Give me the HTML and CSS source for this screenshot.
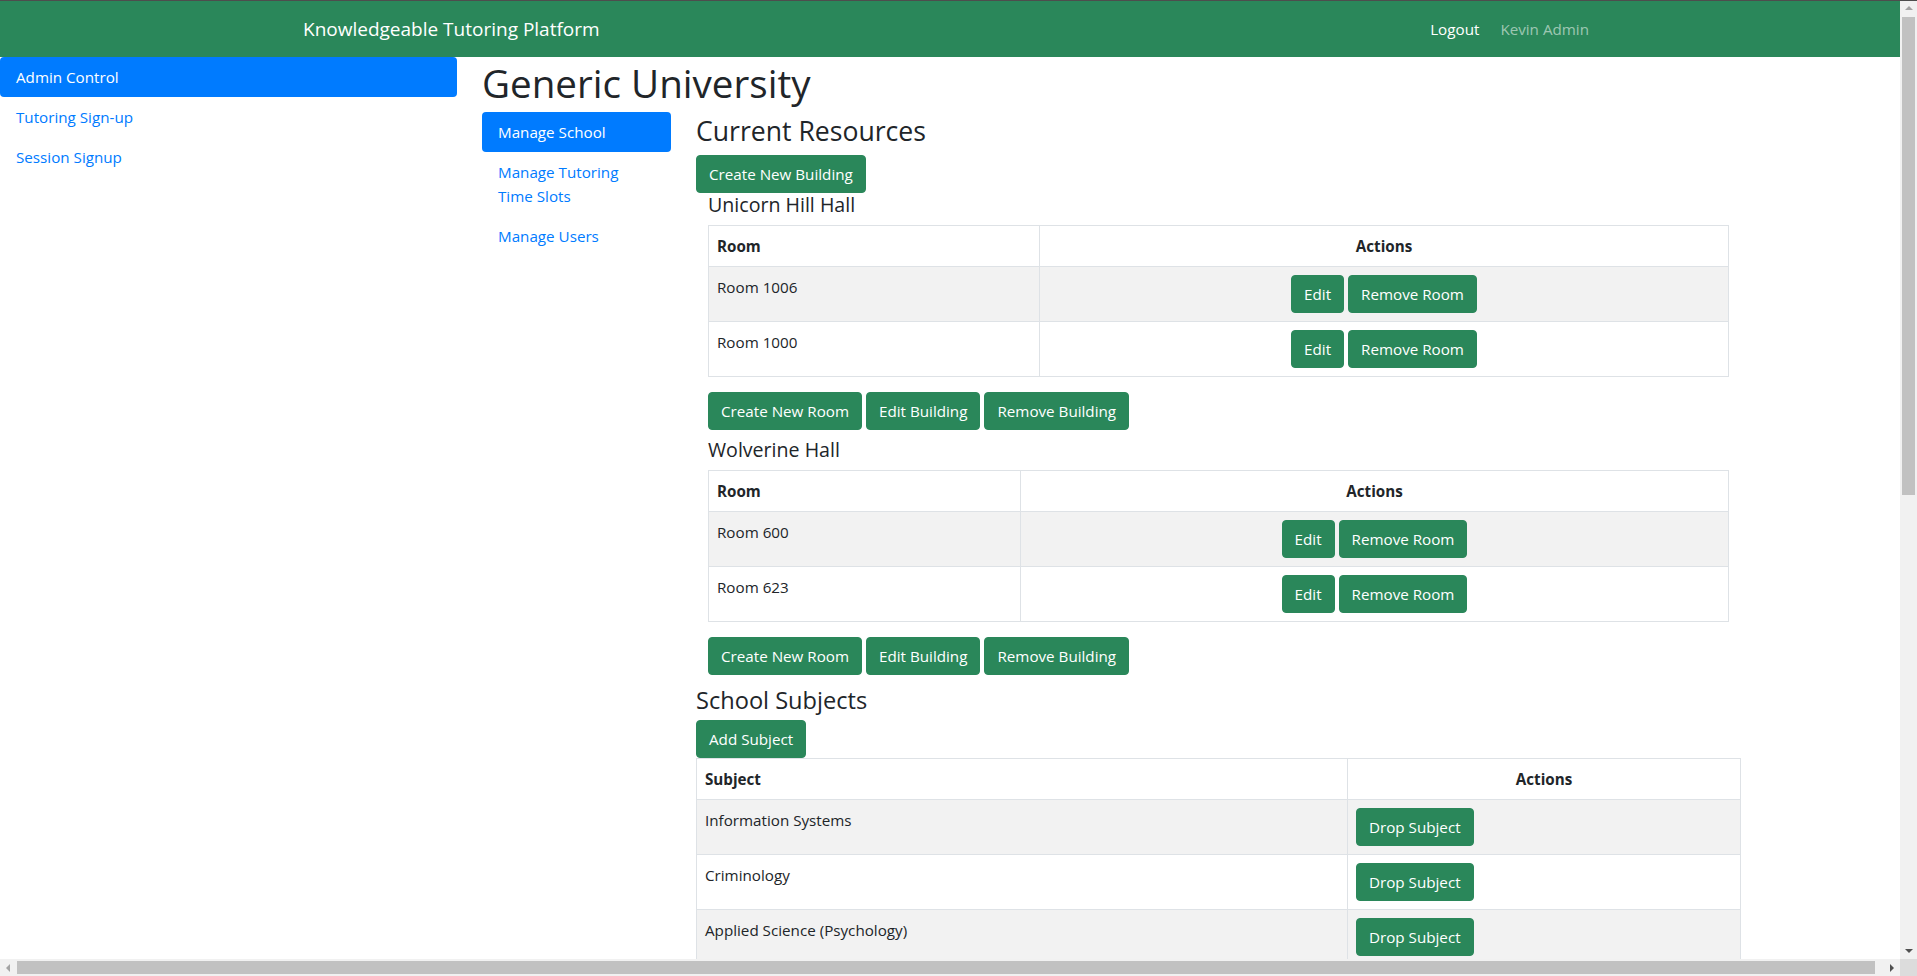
FILE: index.html
```html
<!DOCTYPE html>
<html lang="en">
<head>
<meta charset="utf-8">
<title>Knowledgeable Tutoring Platform</title>
<link rel="stylesheet" href="styles.css">
</head>
<body>
<div class="window-top"></div>
<nav class="navbar">
  <div class="nav-container">
    <a class="brand" href="#">Knowledgeable Tutoring Platform</a>
    <div class="nav-right">
      <a class="nav-link nav-active" href="#">Logout</a>
      <a class="nav-link nav-muted" href="#">Kevin Admin</a>
    </div>
  </div>
</nav>
<div class="layout">
  <aside class="sidebar">
    <a class="pill active" href="#">Admin Control</a>
    <a class="pill" href="#">Tutoring Sign-up</a>
    <a class="pill" href="#">Session Signup</a>
  </aside>
  <main class="main">
    <h1>Generic University</h1>
    <div class="main-row">
      <nav class="subnav">
        <a class="pill active" href="#">Manage School</a>
        <a class="pill" href="#">Manage Tutoring<br>Time Slots</a>
        <a class="pill" href="#">Manage Users</a>
      </nav>
      <section class="content">
        <h2>Current Resources</h2>
        <div class="btn-line"><button class="btn">Create New Building</button></div>

        <div class="building">
          <h5>Unicorn Hill Hall</h5>
          <table class="table">
            <colgroup><col class="col-room-a"><col></colgroup>
            <thead>
              <tr><th>Room</th><th class="center">Actions</th></tr>
            </thead>
            <tbody>
              <tr class="striped"><td>Room 1006</td><td><div class="cell-actions"><button class="btn">Edit</button><button class="btn">Remove Room</button></div></td></tr>
              <tr><td>Room 1000</td><td><div class="cell-actions"><button class="btn">Edit</button><button class="btn">Remove Room</button></div></td></tr>
            </tbody>
          </table>
          <div class="btn-row">
            <button class="btn">Create New Room</button>
            <button class="btn">Edit Building</button>
            <button class="btn">Remove Building</button>
          </div>
        </div>

        <div class="building">
          <h5>Wolverine Hall</h5>
          <table class="table">
            <colgroup><col class="col-room-b"><col></colgroup>
            <thead>
              <tr><th>Room</th><th class="center">Actions</th></tr>
            </thead>
            <tbody>
              <tr class="striped"><td>Room 600</td><td><div class="cell-actions"><button class="btn">Edit</button><button class="btn">Remove Room</button></div></td></tr>
              <tr><td>Room 623</td><td><div class="cell-actions"><button class="btn">Edit</button><button class="btn">Remove Room</button></div></td></tr>
            </tbody>
          </table>
          <div class="btn-row">
            <button class="btn">Create New Room</button>
            <button class="btn">Edit Building</button>
            <button class="btn">Remove Building</button>
          </div>
        </div>

        <h3>School Subjects</h3>
        <div class="btn-line"><button class="btn">Add Subject</button></div>
        <table class="table">
          <colgroup><col class="col-subject"><col></colgroup>
          <thead>
            <tr><th>Subject</th><th class="center">Actions</th></tr>
          </thead>
          <tbody>
            <tr class="striped"><td>Information Systems</td><td><div class="cell-actions left"><button class="btn">Drop Subject</button></div></td></tr>
            <tr><td>Criminology</td><td><div class="cell-actions left"><button class="btn">Drop Subject</button></div></td></tr>
            <tr class="striped"><td>Applied Science (Psychology)</td><td><div class="cell-actions left"><button class="btn">Drop Subject</button></div></td></tr>
          </tbody>
        </table>
      </section>
    </div>
  </main>
</div>

<div class="vscroll">
  <div class="arrow arrow-up"></div>
  <div class="vthumb"></div>
  <div class="arrow arrow-down"></div>
</div>
<div class="hscroll">
  <div class="arrow arrow-left"></div>
  <div class="hthumb"></div>
  <div class="arrow arrow-right"></div>
</div>
<div class="scroll-corner"></div>
</body>
</html>
```

FILE: styles.css
```css
* { box-sizing: border-box; }

html, body {
  margin: 0;
  padding: 0;
  height: 100%;
  overflow: hidden;
}

body {
  font-family: "Open Sans", "Noto Sans", "Liberation Sans", sans-serif;
  font-size: 15.2px;
  line-height: 24px;
  color: #212529;
  background: #fff;
}

a { text-decoration: none; }

/* window chrome */
.window-top {
  position: fixed;
  top: 0; left: 0; right: 0;
  height: 1px;
  background: #4d4d4d;
  z-index: 10;
}

/* navbar */
.navbar {
  height: 57px;
  background: #2a875a;
  display: flex;
  align-items: center;
}
.nav-container {
  width: 1326px;
  margin: 0 287px;
  padding: 0 16px;
  display: flex;
  align-items: center;
  justify-content: space-between;
}
.brand {
  color: #fff;
  font-size: 19px;
  line-height: 30px;
}
.nav-right {
  display: flex;
  gap: 5px;
}
.nav-link {
  padding: 0 8px;
  font-size: 15.2px;
}
.nav-active { color: #fff; }
.nav-muted { color: rgba(255, 255, 255, 0.55); }

/* layout */
.layout {
  display: flex;
  align-items: flex-start;
}
.sidebar {
  width: 457px;
  display: flex;
  flex-direction: column;
}
.pill {
  display: block;
  padding: 8px 16px;
  color: #007bff;
  border-radius: 4px;
  line-height: 24px;
}
.pill.active {
  background: #007bff;
  color: #fff;
}

.main {
  margin-left: 25px;
  width: 1259px;
}
h1 {
  margin: 2px 0 5px;
  font-size: 38.6px;
  line-height: 48px;
  font-weight: 500;
}
.main-row {
  display: flex;
  align-items: flex-start;
  gap: 25px;
}
.subnav {
  width: 189px;
  display: flex;
  flex-direction: column;
}
.content {
  width: 1045px;
}
h2 {
  margin: 0 0 5px;
  font-size: 26.6px;
  line-height: 38px;
  font-weight: 500;
}
h3 {
  margin: 4px 0 3px;
  font-size: 23.6px;
  line-height: 34px;
  font-weight: 500;
}
h5 {
  margin: 0 0 8px;
  font-size: 19.6px;
  line-height: 24px;
  font-weight: 500;
}

/* buttons */
.btn-line { display: flex; }
.btn {
  font-family: inherit;
  font-size: 15.2px;
  line-height: 24px;
  padding: 6px 12px;
  border: 1px solid #2a875a;
  background: #2a875a;
  color: #fff;
  border-radius: 4px;
  cursor: pointer;
}
.btn-row {
  display: flex;
  gap: 4px;
  margin-bottom: 8px;
}

.building {
  padding: 0 12px;
}

/* tables */
.table {
  width: 100%;
  border-collapse: collapse;
  table-layout: fixed;
  margin-bottom: 15px;
}
.table th,
.table td {
  border: 1px solid #dee2e6;
  padding: 8px;
  vertical-align: top;
  text-align: left;
}
.table th {
  font-weight: 700;
}
.table th.center { text-align: center; }
.table tr.striped td { background: #f2f2f2; }
.col-room-a { width: 331px; }
.col-room-b { width: 312px; }
.col-subject { width: 651px; }

.cell-actions {
  display: flex;
  justify-content: center;
  gap: 4px;
}
.cell-actions.left { justify-content: flex-start; }

/* fake browser scrollbars (overlay) */
.vscroll {
  position: fixed;
  top: 0; right: 0;
  width: 17px;
  height: 959px;
  background: #f1f1f1;
  z-index: 5;
}
.vthumb {
  position: absolute;
  top: 17px;
  left: 2px;
  width: 13px;
  height: 478px;
  background: #c1c1c1;
}
.hscroll {
  position: fixed;
  left: 0; bottom: 0;
  width: 1900px;
  height: 17px;
  background: #f1f1f1;
  z-index: 5;
}
.hthumb {
  position: absolute;
  left: 17px;
  top: 2px;
  height: 13px;
  width: 1858px;
  background: #c1c1c1;
}
.scroll-corner {
  position: fixed;
  right: 0; bottom: 0;
  width: 17px; height: 17px;
  background: #dcdcdc;
  z-index: 5;
}
.arrow {
  position: absolute;
  width: 0; height: 0;
}
.arrow-up {
  top: 6px; left: 5px;
  border-left: 4px solid transparent;
  border-right: 4px solid transparent;
  border-bottom: 4px solid #a3a3a3;
}
.arrow-down {
  bottom: 6px; left: 5px;
  border-left: 4px solid transparent;
  border-right: 4px solid transparent;
  border-top: 4px solid #505050;
}
.arrow-left {
  left: 6px; top: 5px;
  border-top: 4px solid transparent;
  border-bottom: 4px solid transparent;
  border-right: 4px solid #a3a3a3;
}
.arrow-right {
  right: 6px; top: 5px;
  border-top: 4px solid transparent;
  border-bottom: 4px solid transparent;
  border-left: 4px solid #505050;
}
```
